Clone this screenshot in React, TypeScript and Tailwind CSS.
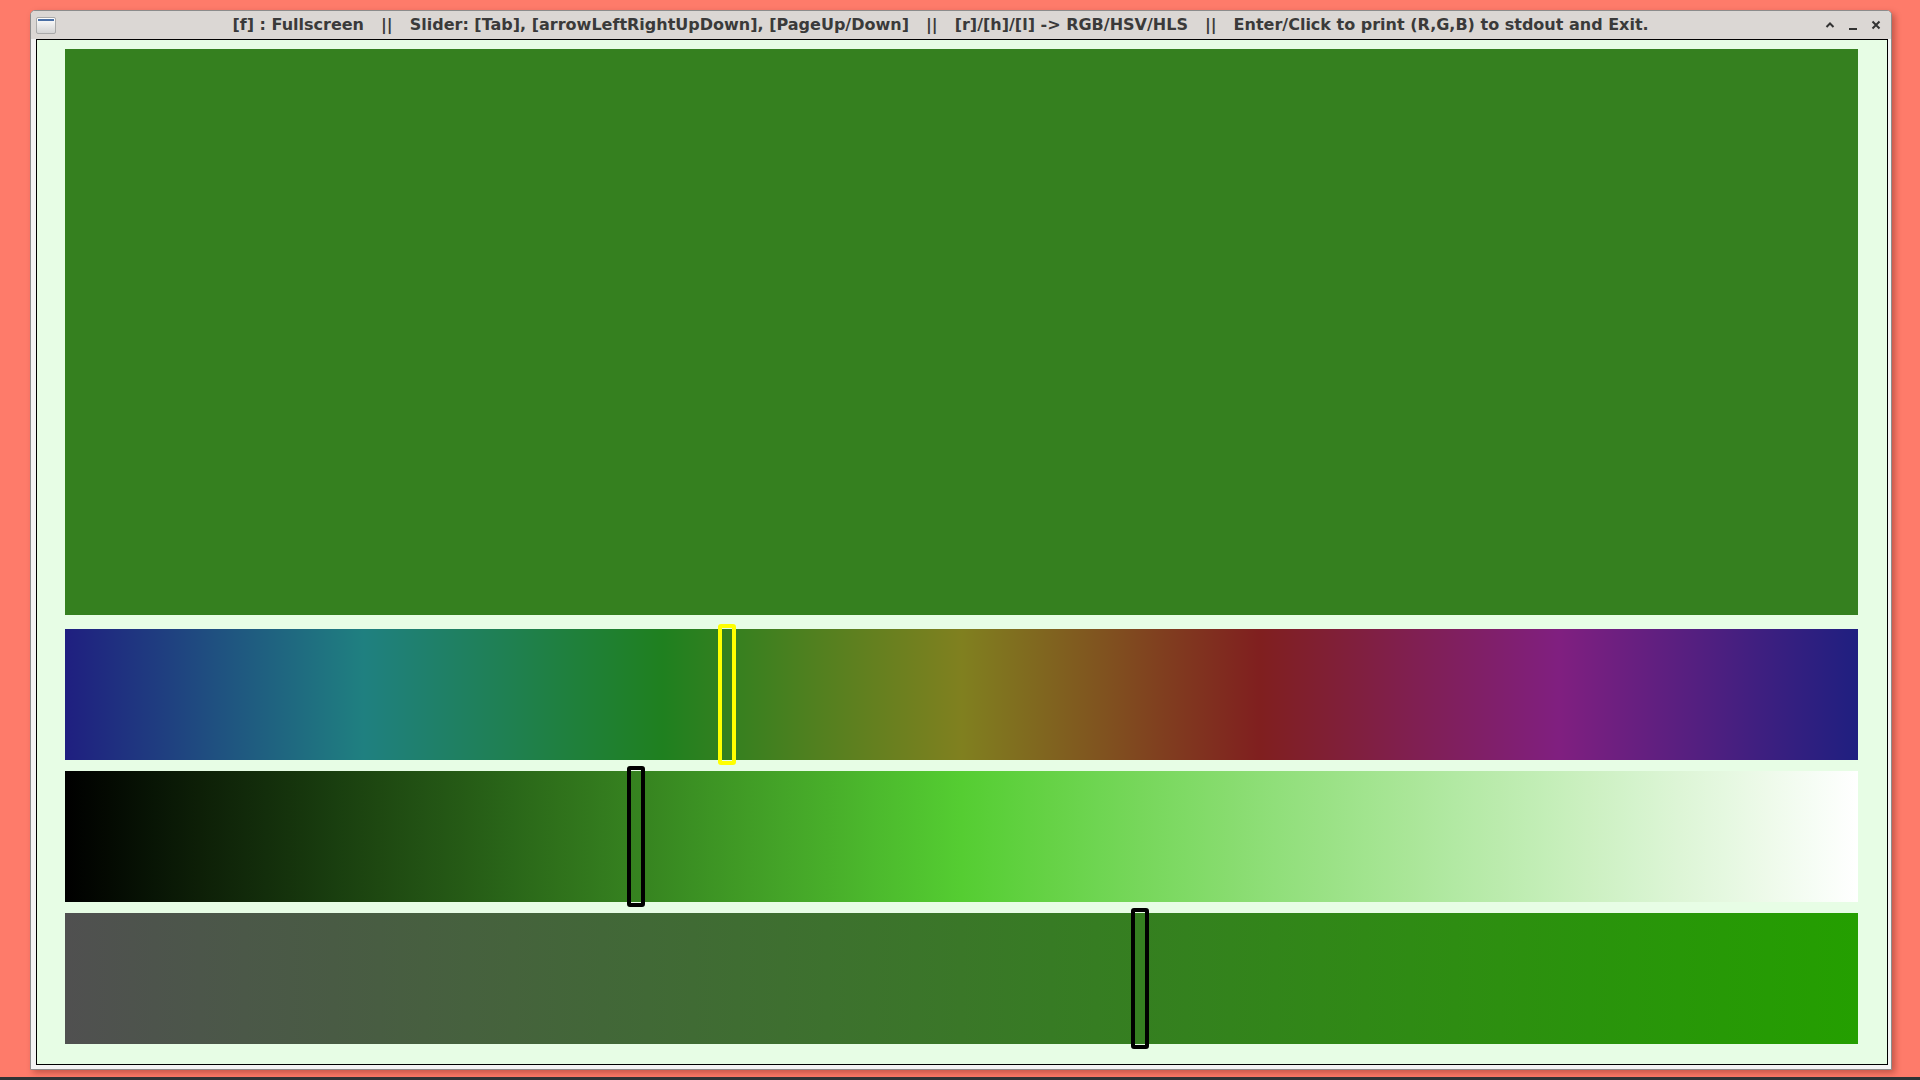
import React from 'react';

// current colour, kept as HLS (hue in degrees, lightness / saturation 0..1)
const current = { h: 106.5, l: 0.312, s: 0.61 };

// slider knob positions, 0..1 along the track
const knobs = { hue: 0.3692, light: 0.3185, sat: 0.5996 };

const hlsToRgb = (h: number, l: number, s: number) => {
  const hh = ((h % 360) + 360) % 360;
  const c = (1 - Math.abs(2 * l - 1)) * s;
  const x = c * (1 - Math.abs(((hh / 60) % 2) - 1));
  const m = l - c / 2;
  let r = 0;
  let g = 0;
  let b = 0;
  if (hh < 60) [r, g, b] = [c, x, 0];
  else if (hh < 120) [r, g, b] = [x, c, 0];
  else if (hh < 180) [r, g, b] = [0, c, x];
  else if (hh < 240) [r, g, b] = [0, x, c];
  else if (hh < 300) [r, g, b] = [x, 0, c];
  else [r, g, b] = [c, 0, x];
  const to = (v: number) => Math.round((v + m) * 255);
  return `rgb(${to(r)},${to(g)},${to(b)})`;
};

const gradient = (stops: number, fn: (t: number) => string) => {
  const list: string[] = [];
  for (let i = 0; i <= stops; i++) {
    const t = i / stops;
    list.push(`${fn(t)} ${(t * 100).toFixed(2)}%`);
  }
  return `linear-gradient(to right, ${list.join(', ')})`;
};

const SLIDER_W = 1793;

interface SliderProps {
  background: string;
  value: number;
  active?: boolean;
}

const Slider = ({ background, value, active }: SliderProps) => (
  <div className="relative h-[131px] w-full" style={{ background }}>
    <div
      className={
        active
          ? 'absolute top-[-5px] h-[141px] w-[18px] rounded-[3px] border-4 border-[#ffff00]'
          : 'absolute top-[-5px] h-[141px] w-[18px] rounded-[3px] border-4 border-black'
      }
      style={{ left: Math.round(value * SLIDER_W) - 9 }}
    />
  </div>
);

const TitleSeparator = () => <span>||</span>;

const WindowIcon = () => (
  <div className="ml-[5px] h-[17px] w-[20px] overflow-hidden rounded-[2px] border border-[#a9a9a9] bg-gradient-to-b from-[#ffffff] to-[#d4d4d4]">
    <div className="mx-[1px] mt-[1px] h-[2px] bg-[#4a6fa5]" />
  </div>
);

const TitleButtons = () => (
  <div className="mr-[10px] flex items-center gap-[13px] text-[#333]">
    <svg width="10" height="10" viewBox="0 0 10 10">
      <path d="M1.5 7 L5 3.5 L8.5 7" fill="none" stroke="currentColor" strokeWidth="2" />
    </svg>
    <svg width="10" height="10" viewBox="0 0 10 10">
      <path d="M1 9 H9" fill="none" stroke="currentColor" strokeWidth="2" />
    </svg>
    <svg width="10" height="10" viewBox="0 0 10 10">
      <path d="M1.5 1.5 L8.5 8.5 M8.5 1.5 L1.5 8.5" fill="none" stroke="currentColor" strokeWidth="2" />
    </svg>
  </div>
);

const App = () => {
  const preview = hlsToRgb(current.h, current.l, current.s);
  // hue runs backwards from blue: 240 -> 180 -> ... -> 240
  const hueBg = gradient(36, (t) => hlsToRgb(240 - 360 * t, current.l, current.s));
  const lightBg = gradient(40, (t) => hlsToRgb(current.h, t, current.s));
  const satBg = gradient(20, (t) => hlsToRgb(current.h, current.l, t));

  return (
    <div className="flex h-[1080px] w-[1920px] flex-col overflow-hidden bg-[#fe7b6a] font-['DejaVu_Sans',sans-serif]">
      <div className="ml-[30px] mt-[10px] flex h-[1060px] w-[1862px] flex-col rounded-t-[5px] border border-[#8c8c8c] bg-[#f3f3f3] shadow-[3px_3px_6px_rgba(90,20,10,0.35)]">
        <div className="flex h-[28px] shrink-0 items-center rounded-t-[4px] bg-[#dbd7d4]">
          <WindowIcon />
          <div className="flex flex-1 justify-center gap-[17px] whitespace-pre text-[16px] font-bold text-[#3a3a3a]">
            <span>[f] : Fullscreen</span>
            <TitleSeparator />
            <span>Slider: [Tab], [arrowLeftRightUpDown], [PageUp/Down]</span>
            <TitleSeparator />
            <span>[r]/[h]/[l] -&gt; RGB/HSV/HLS</span>
            <TitleSeparator />
            <span>Enter/Click to print (R,G,B) to stdout and Exit.</span>
          </div>
          <TitleButtons />
        </div>
        <div className="flex flex-1 flex-col pb-[4px] pl-[5px] pr-[3px]">
          <div className="flex flex-1 flex-col border border-black bg-[#e7fde5] pb-[20px] pl-[28px] pr-[29px] pt-[9px]">
            <div className="h-[566px] w-full" style={{ background: preview }} />
            <div className="mt-[14px] flex flex-col gap-[11px]">
              <Slider background={hueBg} value={knobs.hue} active />
              <Slider background={lightBg} value={knobs.light} />
              <Slider background={satBg} value={knobs.sat} />
            </div>
          </div>
        </div>
      </div>
      <div className="flex-1" />
      <div className="h-[3px] bg-[#2f3335]" />
    </div>
  );
};

export default App;
